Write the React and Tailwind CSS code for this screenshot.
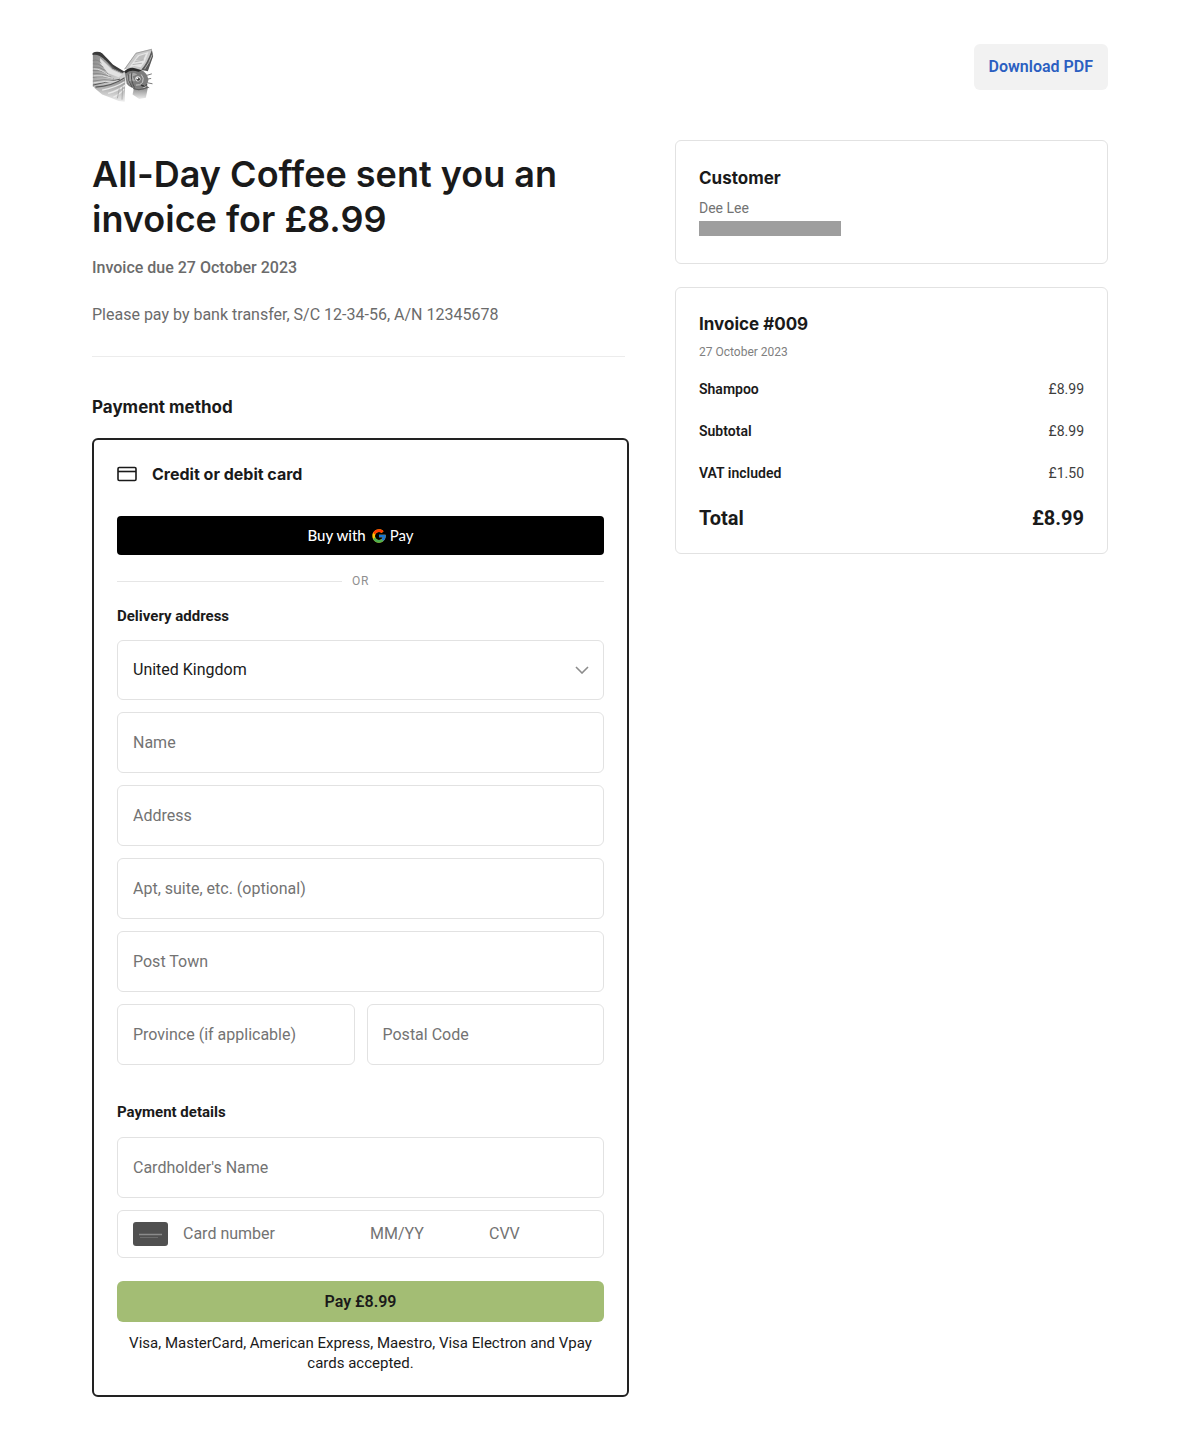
import { FcGoogle } from 'react-icons/fc'

const ADDRESS_FIELDS = [
  { id: 'name',     label: 'Name' },
  { id: 'address',  label: 'Address' },
  { id: 'apt',      label: 'Apt, suite, etc. (optional)' },
  { id: 'town',     label: 'Post Town' },
  { id: 'province', label: 'Province (if applicable)', half: true },
  { id: 'postcode', label: 'Postal Code', half: true },
]

const LINES = [
  { label: 'Shampoo',      amount: '£8.99' },
  { label: 'Subtotal',     amount: '£8.99' },
  { label: 'VAT included', amount: '£1.50' },
]

// Engraved flying fish
function FishLogo() {
  return (
    <svg viewBox="36 38 186 166" className="w-[62px] h-[55px]" role="img" aria-label="All-Day Coffee">
      <defs>
        <linearGradient id="wing" x1="0" y1="0" x2="1" y2="1">
          <stop offset="0" stopColor="#858585" />
          <stop offset="0.5" stopColor="#b4b4b4" />
          <stop offset="1" stopColor="#e4e4e4" />
        </linearGradient>
        <linearGradient id="fade" x1="0" y1="0" x2="0" y2="1">
          <stop offset="0" stopColor="#8a8a8a" />
          <stop offset="1" stopColor="#ececec" />
        </linearGradient>
      </defs>
      {/* left wing */}
      <path d="M38 52 L60 50 L84 72 L106 96 L136 112 L138 128 L104 150 L38 156 Z" fill="url(#wing)" />
      <path d="M37 54 Q50 45 66 54 L98 88 L134 110 L126 114 L98 101 L70 70 Q54 55 37 59 Z" fill="#3a3a3a" />
      <path d="M60 68 L96 104 L126 118 L116 126 L84 114 L60 84 Z" fill="#e2e2e2" />
      <path d="M74 74 L104 102 L128 114" fill="none" stroke="#8f8f8f" strokeWidth="2" />
      <g fill="none" stroke="#787878" strokeWidth="2">
        <path d="M38 76 Q52 70 64 84" />
        <path d="M38 86 Q54 82 70 96" />
        <path d="M38 96 Q56 92 76 106" />
        <path d="M38 106 Q58 102 84 116" />
        <path d="M38 116 Q62 112 94 126" />
        <path d="M38 127 Q66 120 102 132" />
        <path d="M38 138 Q70 130 108 136" />
        <path d="M38 150 Q74 142 120 132" stroke="#5a5a5a" strokeWidth="3" />
      </g>
      <g fill="none" stroke="#dedede" strokeWidth="3">
        <path d="M40 101 Q62 100 88 122" />
        <path d="M40 122 Q66 118 98 130" />
        <path d="M40 143 Q76 138 112 138" />
      </g>
      {/* lower fins */}
      <path d="M46 152 Q90 158 136 130 L134 200 L116 198 L92 188 L66 178 L42 158 Z" fill="url(#fade)" />
      <path d="M46 156 Q96 154 134 128" fill="none" stroke="#5a5a5a" strokeWidth="4" />
      <path d="M66 165 Q106 158 134 140 M84 175 Q112 168 136 150 M100 186 Q120 178 132 162" fill="none" stroke="#e9e9e9" strokeWidth="4" />
      <path d="M118 160 L112 190 M128 154 L126 194" fill="none" stroke="#9a9a9a" strokeWidth="2" />
      {/* right wing */}
      <path d="M132 102 L168 52 L216 40 L220 62 L204 104 L180 108 L160 98 Z" fill="#cacaca" />
      <path d="M148 96 L174 60 L206 50 L194 82 L182 96 L164 92 Z" fill="#e6e6e6" />
      <path d="M166 76 L178 62 L198 56 L190 74 Z" fill="#bdbdbd" />
      <path d="M184 104 Q202 84 216 44 L220 62 L204 108 Z" fill="#585858" />
      <path d="M194 102 Q208 84 217 58" fill="none" stroke="#b0b0b0" strokeWidth="3" />
      <path d="M134 102 L168 54 L216 42" fill="none" stroke="#8a8a8a" strokeWidth="2" />
      <path d="M158 88 L186 84 M164 80 L192 74" fill="none" stroke="#a0a0a0" strokeWidth="2" />
      {/* body and head */}
      <path d="M134 108 Q158 94 182 104 Q202 112 206 134 Q202 156 180 162 Q152 162 140 146 Z" fill="#7c7c7c" />
      <path d="M132 110 Q144 96 162 98 L186 106 L176 110 Q152 102 138 114 Z" fill="#2c2c2c" />
      <path d="M142 122 Q156 106 172 118 L158 124 L166 138 L150 138 L154 154 Q140 142 142 122 Z" fill="#a8a8a8" />
      <path d="M146 118 Q142 136 156 156 M156 112 Q150 132 164 158" fill="none" stroke="#505050" strokeWidth="3" />
      <circle cx="174" cy="131" r="8" fill="#e2e2e2" />
      <circle cx="175" cy="132" r="5" fill="#3c3c3c" />
      <circle cx="173" cy="130" r="2" fill="#fff" />
      <path d="M184 118 Q194 128 188 142 Q180 152 168 150" fill="none" stroke="#c9c9c9" strokeWidth="3" />
      <path d="M184 150 Q194 156 202 148" fill="none" stroke="#333" strokeWidth="4" />
      <path d="M196 122 L216 116 M200 132 L214 130 M198 142 L218 146 M192 150 L208 158" fill="none" stroke="#7a7a7a" strokeWidth="3" />
      <path d="M162 158 L204 158 L198 188 L178 192 L158 178 Z" fill="url(#fade)" />
      <path d="M160 160 Q180 168 204 156" fill="none" stroke="#5c5c5c" strokeWidth="4" />
    </svg>
  )
}

function CardOutline() {
  return (
    <svg viewBox="0 0 20 16" className="w-5 h-4" fill="none" stroke="#1a1a1a" aria-hidden="true">
      <rect x="1" y="1.5" width="18" height="13" rx="1.2" strokeWidth="1.6" />
      <path d="M1 5.5h18" strokeWidth="1.6" />
    </svg>
  )
}

function CardSolid() {
  return (
    <svg viewBox="0 0 35 24" className="w-[35px] h-6 shrink-0" aria-hidden="true">
      <rect width="35" height="24" rx="3" fill="#505050" />
      <path d="M6 12.5h23" stroke="#8b8b8b" strokeWidth="1.5" />
      <path d="M7 15.5h18" stroke="#6c6c6c" strokeWidth="1" />
    </svg>
  )
}

function Field({ id, label, half }) {
  return (
    <input
      id={id}
      type="text"
      aria-label={label}
      placeholder={label}
      className={`${half ? 'col-span-1' : 'col-span-2'} w-full min-w-0 h-[61px] px-[15px] rounded-md border border-[#e2e2e2]
                  text-base text-[#1a1a1a] placeholder:text-[#737373]`}
    />
  )
}

export default function App() {
  return (
    <div className="min-h-screen bg-white px-6 lg:px-[92px] pt-11 pb-8 font-['Roboto',sans-serif] text-[#1a1a1a]">
      <header className="flex items-start justify-between">
        <div className="pt-1">
          <FishLogo />
        </div>
        <a href="#download" className="rounded-md bg-[#f2f2f2] px-[15px] py-[11px] text-base font-semibold text-[#2b5fc1]">
          Download PDF
        </a>
      </header>

      <main className="grid grid-cols-1 lg:grid-cols-[537fr_433fr] items-start gap-[46px] pt-[37px]">
        <div>
          <h1 className="pt-3 font-['Inter',sans-serif] text-4xl leading-[45px] font-semibold">
            All-Day Coffee sent you an invoice for £8.99
          </h1>
          <p className="mt-[14px] text-base font-medium text-[#6b6b6b]">Invoice due 27 October 2023</p>
          <p className="mt-[23px] text-base text-[#6b6b6b]">
            Please pay by bank transfer, S/C 12-34-56, A/N 12345678
          </p>
          <hr className="mt-[29px] mr-1 border-[#ececec]" />

          <h2 className="mt-[38px] font-['Inter',sans-serif] text-[17px] leading-6 font-bold">Payment method</h2>

          <form className="mt-[19px] rounded-md border-2 border-[#222] px-[23px] py-[22px]">
            <div className="flex items-center gap-[15px]">
              <CardOutline />
              <h3 className="font-['Inter',sans-serif] text-base font-bold">Credit or debit card</h3>
            </div>

            <button
              type="button"
              className="mt-[30px] flex h-[39px] w-full items-center justify-center gap-[5px] rounded bg-black
                         font-['Lato',sans-serif] text-[15px] text-white">
              <span className="font-medium">Buy with</span>
              <span className="flex items-center gap-[3px]">
                <FcGoogle className="size-4" aria-hidden="true" />
                Pay
              </span>
            </button>

            <div className="mt-[18px] flex items-center gap-[10px] text-xs tracking-wider text-[#8f8f8f]">
              <span className="h-px flex-1 bg-[#e6e6e6]" />
              OR
              <span className="h-px flex-1 bg-[#e6e6e6]" />
            </div>

            <h4 className="mt-[15px] text-[15px] leading-6 font-bold">Delivery address</h4>
            <div className="mt-3 grid grid-cols-2 gap-3">
              <div className="relative col-span-2">
                <select
                  id="country"
                  aria-label="Country"
                  className="block h-[60px] w-full appearance-none rounded-md border border-[#e2e2e2] bg-white px-[15px] text-base">
                  <option>United Kingdom</option>
                </select>
                <svg
                  viewBox="0 0 14 8"
                  className="pointer-events-none absolute top-[26px] right-[15px] h-2 w-[14px]"
                  fill="none" stroke="#8c8c8c" strokeWidth="1.6" aria-hidden="true">
                  <path d="M1 1l6 6 6-6" />
                </svg>
              </div>
              {ADDRESS_FIELDS.map(f => <Field key={f.id} {...f} />)}
            </div>

            <h4 className="mt-[35px] text-[15px] leading-6 font-bold">Payment details</h4>
            <div className="mt-[13px] grid grid-cols-2 gap-3">
              <Field id="cardholder" label="Cardholder's Name" />
              <div className="col-span-2 flex h-12 items-center rounded-md border border-[#e2e2e2] px-[15px]">
                <CardSolid />
                <input aria-label="Card number" placeholder="Card number" className="ml-[15px] w-0 min-w-0 flex-[187] placeholder:text-[#737373]" />
                <input aria-label="Expiry date" placeholder="MM/YY" className="w-0 min-w-0 flex-[119] placeholder:text-[#737373]" />
                <input aria-label="CVV" placeholder="CVV" className="w-0 min-w-0 flex-[99] placeholder:text-[#737373]" />
              </div>
            </div>

            <button type="submit" className="mt-[23px] h-[41px] w-full rounded-md bg-[#a3bd74] text-base font-semibold">
              Pay £8.99
            </button>
            <p className="mt-[11px] text-center text-[15px] leading-5">
              Visa, MasterCard, American Express, Maestro, Visa Electron and Vpay cards accepted.
            </p>
          </form>
        </div>

        <aside className="flex flex-col gap-[23px]">
          <section className="rounded-md border border-[#e2e2e2] px-[23px] pt-[25px] pb-[27px]">
            <h2 className="font-['Inter',sans-serif] text-[17px] leading-6 font-bold">Customer</h2>
            <p className="mt-2 text-sm text-[#737373]">Dee Lee</p>
            <div className="mt-[3px] h-[15px] w-[142px] bg-[#9e9e9e]" />
          </section>

          <section className="rounded-md border border-[#e2e2e2] px-[23px] pt-6 pb-[11px]">
            <h2 className="font-['Inter',sans-serif] text-[17px] leading-6 font-bold">Invoice #009</h2>
            <p className="mt-2 text-xs text-[#808080]">27 October 2023</p>
            <table className="mt-2 w-full text-sm">
              <tbody>
                {LINES.map(l => (
                  <tr key={l.label} className="h-[42px]">
                    <th scope="row" className="text-left font-semibold">{l.label}</th>
                    <td className="text-right text-[#3d3d3d]">{l.amount}</td>
                  </tr>
                ))}
              </tbody>
              <tfoot>
                <tr className="h-12 text-xl font-bold">
                  <th scope="row" className="text-left">Total</th>
                  <td className="text-right">£8.99</td>
                </tr>
              </tfoot>
            </table>
          </section>
        </aside>
      </main>
    </div>
  )
}
